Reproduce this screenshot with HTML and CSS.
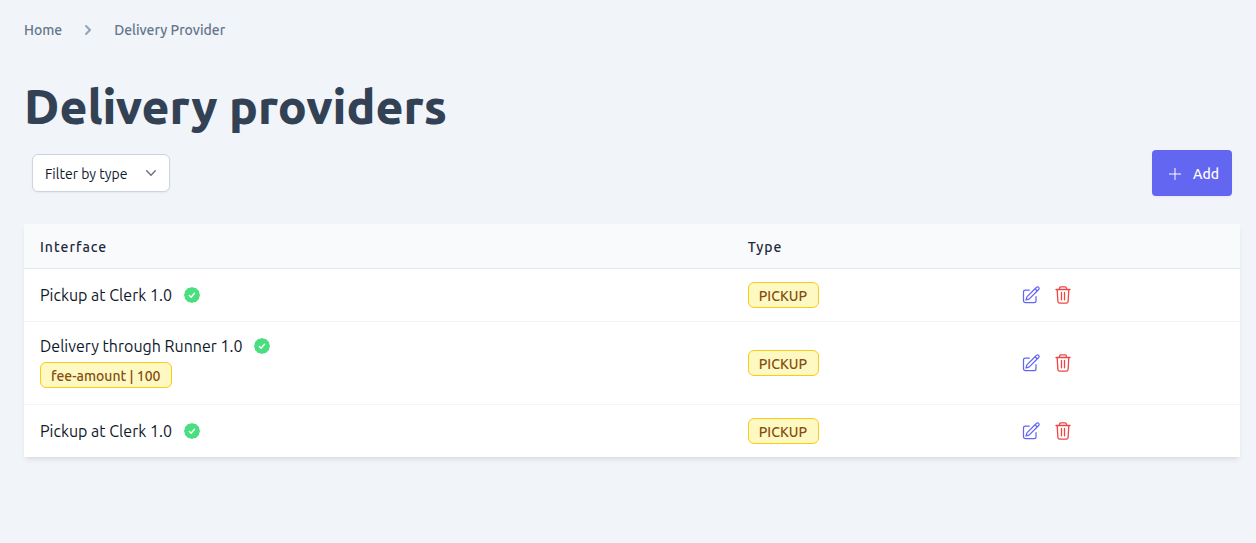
FILE: index.html
```html
<!DOCTYPE html>
<html lang="en">
<head>
<meta charset="utf-8">
<meta name="viewport" content="width=device-width, initial-scale=1">
<title>Delivery providers</title>
<link rel="stylesheet" href="styles.css">
</head>
<body>
<svg class="sprite" aria-hidden="true">
  <symbol id="check" viewBox="0 0 16 16">
    <path fill="currentColor" d="M8 0 9.900 .7 12 1 13.400 2.600 15 4 15.300 6.100 16 8 15.300 9.900 15 12 13.400 13.400 12 15 9.900 15.300 8 16 6.100 15.300 4 15 2.600 13.400 1 12 .7 9.900 0 8 .7 6.100 1 4 2.600 2.600 4 1 6.100 .7Z"/>
    <path fill="none" stroke="#fff" stroke-width="1.400" stroke-linecap="round" stroke-linejoin="round" d="m5.400 8.500 1.700 1.700 3.400-4"/>
  </symbol>
  <symbol id="edit" viewBox="0 0 24 24">
    <path fill="none" stroke="currentColor" stroke-width="1.500" stroke-linecap="round" stroke-linejoin="round" d="m16.862 4.487 1.687-1.688a1.875 1.875 0 1 1 2.652 2.652L10.582 16.070a4.500 4.500 0 0 1-1.897 1.130L6 18l.8-2.685a4.500 4.500 0 0 1 1.130-1.897l8.932-8.931Zm0 0L19.500 7.125M18 14v4.750A2.250 2.250 0 0 1 15.750 21H5.250A2.250 2.250 0 0 1 3 18.750V8.250A2.250 2.250 0 0 1 5.250 6H10"/>
  </symbol>
  <symbol id="trash" viewBox="0 0 20 20">
    <path fill="none" stroke="currentColor" stroke-width="1.300" stroke-linecap="round" stroke-linejoin="round" d="M3 4.500h14M6.500 4.300V3.400c0-1 .6-1.600 1.500-1.600h4c.9 0 1.500.6 1.500 1.600v.9M4.200 4.700l.7 11.800c.1 1 .8 1.700 1.800 1.700h6.600c1 0 1.700-.7 1.800-1.700l.7-11.800M8.500 7.500v7.300M11.500 7.500v7.300"/>
  </symbol>
</svg>
<main class="page">
  <nav class="breadcrumbs" aria-label="Breadcrumb">
    <a href="#">Home</a>
    <svg class="breadcrumb-arrow" viewBox="0 0 20 20" aria-hidden="true"><path fill="currentColor" fill-rule="evenodd" d="M7.293 14.707a1 1 0 0 1 0-1.414L10.586 10 7.293 6.707a1 1 0 0 1 1.414-1.414l4 4a1 1 0 0 1 0 1.414l-4 4a1 1 0 0 1-1.414 0z"/></svg>
    <a href="#">Delivery Provider</a>
  </nav>
  <h1 class="title">Delivery providers</h1>
  <div class="toolbar">
    <div class="filter">
      <select class="filter-select" aria-label="Filter by type"><option>Filter by type</option></select>
      <svg class="filter-arrow" viewBox="0 0 20 20" aria-hidden="true"><path fill="currentColor" fill-rule="evenodd" d="M5.230 7.210a.75.75 0 0 1 1.060.020L10 11.168l3.710-3.938a.75.75 0 1 1 1.080 1.040l-4.250 4.500a.75.75 0 0 1-1.080 0l-4.250-4.500a.75.75 0 0 1 .020-1.060z"/></svg>
    </div>
    <button class="add" type="button">
      <svg class="add-icon" viewBox="0 0 12 12" aria-hidden="true"><path fill="none" stroke="currentColor" d="M6 0v12M0 6h12"/></svg>
      Add
    </button>
  </div>
  <table class="providers">
    <thead>
      <tr><th class="col-interface" scope="col">Interface</th><th class="col-type" scope="col">Type</th><td class="col-actions"></td></tr>
    </thead>
    <tbody>
      <tr>
        <td><div class="name">Pickup at Clerk 1.0 <svg class="check"><use href="#check"/></svg></div></td>
        <td><span class="badge">PICKUP</span></td>
        <td><div class="actions"><button class="icon-button edit" type="button" aria-label="Edit"><svg><use href="#edit"/></svg></button><button class="icon-button delete" type="button" aria-label="Delete"><svg><use href="#trash"/></svg></button></div></td>
      </tr>
      <tr>
        <td><div class="name">Delivery through Runner 1.0 <svg class="check"><use href="#check"/></svg></div><span class="badge fee">fee-amount | 100</span></td>
        <td><span class="badge">PICKUP</span></td>
        <td><div class="actions"><button class="icon-button edit" type="button" aria-label="Edit"><svg><use href="#edit"/></svg></button><button class="icon-button delete" type="button" aria-label="Delete"><svg><use href="#trash"/></svg></button></div></td>
      </tr>
      <tr>
        <td><div class="name">Pickup at Clerk 1.0 <svg class="check"><use href="#check"/></svg></div></td>
        <td><span class="badge">PICKUP</span></td>
        <td><div class="actions"><button class="icon-button edit" type="button" aria-label="Edit"><svg><use href="#edit"/></svg></button><button class="icon-button delete" type="button" aria-label="Delete"><svg><use href="#trash"/></svg></button></div></td>
      </tr>
    </tbody>
  </table>
</main>
</body>
</html>
```
FILE: styles.css
```css
*, *::before, *::after { box-sizing: border-box; }
body {
  margin: 0;
  background: #f1f5f9;
  color: #0f172a;
  font-family: Ubuntu, "Noto Sans", sans-serif;
  font-size: 16px;
  line-height: 24px;
}
button, select { font: inherit; }
svg { display: block; flex: none; }
.sprite { position: absolute; width: 0; height: 0; }
.page { padding: 20px 16px 20px 24px; }
.breadcrumbs { display: flex; align-items: center; gap: 16px; font-size: 14px; line-height: 20px; font-weight: 500; color: #64748b; }
.breadcrumbs a { color: inherit; text-decoration: none; }
.breadcrumb-arrow { width: 20px; height: 20px; color: #94a3b8; }
.title { margin: 42px 0 20px; font-size: 48px; line-height: 48px; font-weight: 800; color: #334155; }
.toolbar { display: flex; align-items: center; justify-content: space-between; padding: 0 8px; }
.filter { display: grid; align-items: center; }
.filter-select {
  grid-area: 1 / 1;
  appearance: none;
  height: 38px;
  padding: 1px 41px 0 12px;
  border: 1px solid #cbd5e1;
  border-radius: 6px;
  background: #fff;
  color: #0f172a;
  font-size: 14px;
  box-shadow: 0 1px 2px rgba(0, 0, 0, 0.05);
}
.filter-arrow { grid-area: 1 / 1; justify-self: end; margin-right: 9px; width: 20px; height: 20px; color: #6b7280; pointer-events: none; }
.add {
  display: flex;
  align-items: center;
  gap: 12px;
  height: 46px;
  padding: 1px 13px 0 17px;
  border: 0;
  border-radius: 4px;
  background: #6366f1;
  color: #fff;
  font-size: 14px;
  font-weight: 500;
  box-shadow: 0 1px 2px rgba(0, 0, 0, 0.05);
}
.add-icon { width: 12px; height: 12px; }
.providers {
  width: 100%;
  margin-top: 28px;
  border-collapse: collapse;
  table-layout: fixed;
  background: #fff;
  box-shadow: 0 4px 6px -1px rgba(0, 0, 0, 0.06), 0 2px 4px -2px rgba(0, 0, 0, 0.1);
}
.providers thead { background: #f8fafc; color: #1e293b; }
.providers th, .providers td { padding: 12px 16px; text-align: left; vertical-align: middle; }
.providers th { padding: 13px 16px 11px; font-size: 14px; line-height: 20px; font-weight: 500; letter-spacing: 1px; }
.providers thead tr { border-bottom: 1px solid #e2e8f0; }
.providers tbody td { height: 53px; }
.providers tbody tr:last-child td { height: 52px; }
.providers tbody tr + tr { border-top: 1px solid #f1f5f9; }
.col-interface { width: 58.2%; }
.col-type { width: 22.5%; }
.name { display: flex; align-items: center; gap: 12px; }
.check { width: 16px; height: 16px; color: #4ade80; }
.badge {
  display: block;
  width: fit-content;
  padding: 3px 11px 1px 10px;
  border: 1px solid #facc15;
  border-radius: 6px;
  background: #fef9c3;
  color: #854d0e;
  font-size: 14px;
  line-height: 20px;
  font-weight: 500;
}
.fee { margin: 4px 0; }
.actions { display: flex; gap: 12px; }
.icon-button { padding: 0; border: 0; background: none; cursor: pointer; }
.icon-button svg { width: 20px; height: 20px; }
.edit { color: #6366f1; }
.delete { color: #ef4444; }
```
